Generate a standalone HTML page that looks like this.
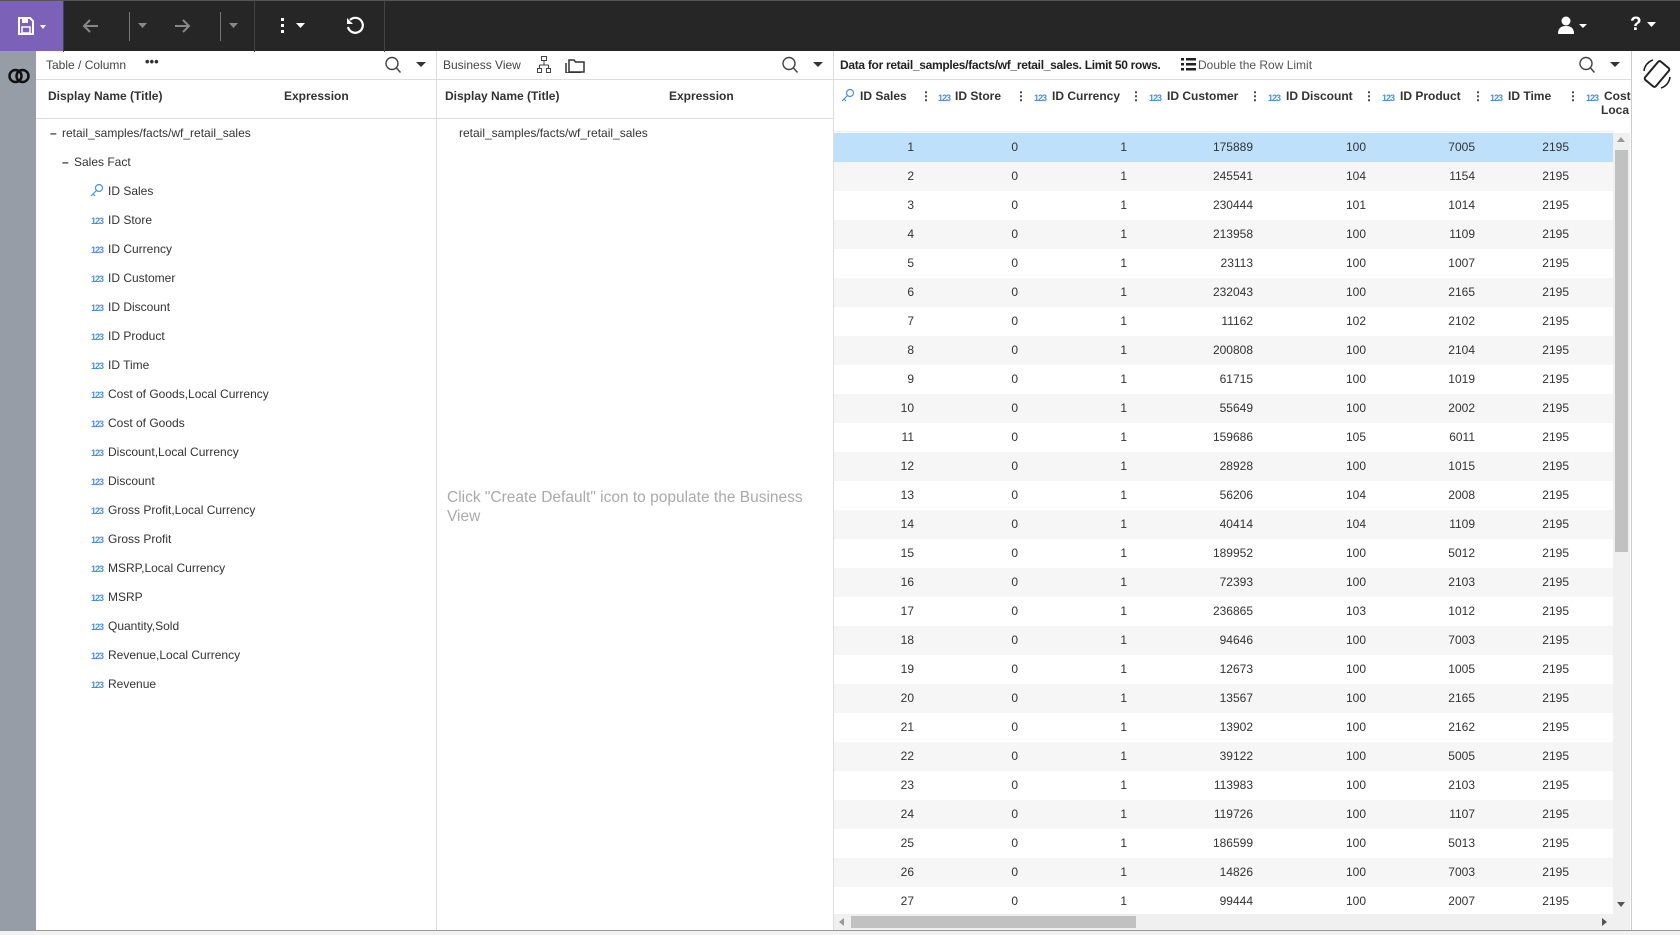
<!DOCTYPE html>
<html><head><meta charset="utf-8"><style>
*{box-sizing:border-box;margin:0;padding:0}
body{width:1680px;height:935px;overflow:hidden;background:#fff;font-family:"Liberation Sans",Arial,sans-serif;font-size:12px;color:#333;position:relative}
.a{position:absolute}
.top{left:0;top:0;width:1680px;height:51px;background:#262626;border-top:1px solid #555}
.sep{position:absolute;top:0;width:1px;height:51px;background:#444}
.gut{left:0;top:51px;width:36px;height:880px;background:#979da6}
.vl{position:absolute;width:1px;background:#ddd}
.hl{position:absolute;height:1px;background:#ddd}
.t{position:absolute;white-space:nowrap}
.ic{position:absolute;font-size:9px;color:#4a90e2;font-weight:bold;letter-spacing:-1px}
.hd{font-weight:bold;color:#333}
.r{position:relative;height:29px}
.r:nth-child(even){background:#f6f6f6}
.r:first-child{background:#bfe0fa}
.r span{position:absolute;top:7px;width:80px;text-align:right}
.c1{left:0}.c2{left:104px}.c3{left:213px}.c4{left:339px}.c5{left:452px}.c6{left:561px}.c7{left:655px}
</style></head><body>
<div class="a top">
  <div class="a" style="left:0;top:0;width:63px;height:50px;background:#7b62b8"></div>
  <svg class="a" style="left:18px;top:16px" width="30" height="18" viewBox="0 0 30 18"><path d="M1 1h11l3 3v13H1z" fill="none" stroke="#fff" stroke-width="2"/><rect x="4" y="1" width="6" height="5" fill="#fff"/><rect x="4" y="10" width="8" height="6" fill="none" stroke="#fff" stroke-width="1.5"/><path d="M22 8h6l-3 4z" fill="#fff"/></svg>
  <div class="sep" style="left:63px"></div>
  <svg class="a" style="left:82px;top:17px" width="18" height="16"><path d="M16 8H3M8 2L2 8l6 6" fill="none" stroke="#888" stroke-width="2"/></svg>
  <div class="a" style="left:129px;top:11px;width:1px;height:29px;background:#777"></div>
  <svg class="a" style="left:138px;top:22px" width="10" height="6"><path d="M0 0h9l-4.5 5z" fill="#888"/></svg>
  <svg class="a" style="left:173px;top:17px" width="18" height="16"><path d="M2 8h13M10 2l6 6-6 6" fill="none" stroke="#888" stroke-width="2"/></svg>
  <div class="a" style="left:220px;top:11px;width:1px;height:29px;background:#777"></div>
  <svg class="a" style="left:229px;top:22px" width="10" height="6"><path d="M0 0h9l-4.5 5z" fill="#888"/></svg>
  <div class="sep" style="left:254px"></div>
  <svg class="a" style="left:279px;top:17px" width="30" height="16"><rect x="2" y="0" width="3" height="3" fill="#fff"/><rect x="2" y="6" width="3" height="3" fill="#fff"/><rect x="2" y="12" width="3" height="3" fill="#fff"/><path d="M17 5h9l-4.5 5z" fill="#fff"/></svg>
  <svg class="a" style="left:345px;top:15px" width="20" height="20" viewBox="0 0 20 20"><path d="M5 4A7.5 7.5 0 1 1 3 11" fill="none" stroke="#fff" stroke-width="2.2"/><path d="M2 2v6h6z" fill="#fff"/></svg>
  <div class="sep" style="left:384px"></div>
  <svg class="a" style="left:1557px;top:15px" width="34" height="20"><circle cx="9" cy="5" r="4.5" fill="#fff"/><path d="M1 18c0-6 3-8 8-8s8 2 8 8z" fill="#fff"/><path d="M22 8h8l-4 4z" fill="#fff"/></svg>
  <div class="t" style="left:1630px;top:13px;color:#fff;font-size:19px;font-weight:bold">?</div>
  <svg class="a" style="left:1647px;top:21px" width="10" height="6"><path d="M0 0h9l-4.5 5z" fill="#fff"/></svg>
</div>
<div class="a gut"></div>
<svg class="a" style="left:8px;top:68px" width="22" height="16"><circle cx="7.5" cy="8" r="6" fill="none" stroke="#111" stroke-width="2.5"/><circle cx="14.5" cy="8" r="6" fill="none" stroke="#111" stroke-width="2.5"/></svg>

<div class="vl" style="left:436px;top:51px;height:880px"></div>
<div class="vl" style="left:833px;top:51px;height:880px"></div>
<div class="vl" style="left:1631px;top:51px;height:880px;background:#ccc"></div>
<div class="hl" style="left:36px;top:79px;width:1595px"></div>
<div class="hl" style="left:36px;top:118px;width:798px"></div>
<div class="hl" style="left:834px;top:131px;width:780px;background:#eee"></div>
<div class="hl" style="left:0;top:930px;width:1680px;background:#999"></div>

<div class="t" style="left:46px;top:58px;color:#444">Table / Column</div>
<div class="t" style="left:145px;top:54px;font-weight:bold;font-size:13px">•••</div>
<svg class="a" style="left:384px;top:56px" width="20" height="18"><circle cx="8" cy="7.5" r="6" fill="none" stroke="#444" stroke-width="1.4"/><path d="M12.5 12l4 4.5" stroke="#444" stroke-width="1.5"/></svg>
<svg class="a" style="left:416px;top:62px" width="10" height="6"><path d="M0 0h10l-5 5z" fill="#333"/></svg>
<div class="t hd" style="left:48px;top:89px">Display Name (Title)</div>
<div class="t hd" style="left:284px;top:89px">Expression</div>
<div class="t" style="left:50px;top:126px;font-weight:bold">–</div><div class="t" style="left:62px;top:126px">retail_samples/facts/wf_retail_sales</div>
<div class="t" style="left:62px;top:155px;font-weight:bold">–</div><div class="t" style="left:74px;top:155px">Sales Fact</div>
<svg class="a" style="left:90px;top:183px" width="14" height="14"><circle cx="9" cy="5" r="3.5" fill="none" stroke="#4a90e2" stroke-width="1.2"/><path d="M6.5 7.5L1 13M3 11l2 2" stroke="#4a90e2" stroke-width="1.2"/></svg><div class="t" style="left:108px;top:184px">ID Sales</div>
<div class="ic" style="left:91px;top:216px">123</div><div class="t" style="left:108px;top:213px">ID Store</div>
<div class="ic" style="left:91px;top:245px">123</div><div class="t" style="left:108px;top:242px">ID Currency</div>
<div class="ic" style="left:91px;top:274px">123</div><div class="t" style="left:108px;top:271px">ID Customer</div>
<div class="ic" style="left:91px;top:303px">123</div><div class="t" style="left:108px;top:300px">ID Discount</div>
<div class="ic" style="left:91px;top:332px">123</div><div class="t" style="left:108px;top:329px">ID Product</div>
<div class="ic" style="left:91px;top:361px">123</div><div class="t" style="left:108px;top:358px">ID Time</div>
<div class="ic" style="left:91px;top:390px">123</div><div class="t" style="left:108px;top:387px">Cost of Goods,Local Currency</div>
<div class="ic" style="left:91px;top:419px">123</div><div class="t" style="left:108px;top:416px">Cost of Goods</div>
<div class="ic" style="left:91px;top:448px">123</div><div class="t" style="left:108px;top:445px">Discount,Local Currency</div>
<div class="ic" style="left:91px;top:477px">123</div><div class="t" style="left:108px;top:474px">Discount</div>
<div class="ic" style="left:91px;top:506px">123</div><div class="t" style="left:108px;top:503px">Gross Profit,Local Currency</div>
<div class="ic" style="left:91px;top:535px">123</div><div class="t" style="left:108px;top:532px">Gross Profit</div>
<div class="ic" style="left:91px;top:564px">123</div><div class="t" style="left:108px;top:561px">MSRP,Local Currency</div>
<div class="ic" style="left:91px;top:593px">123</div><div class="t" style="left:108px;top:590px">MSRP</div>
<div class="ic" style="left:91px;top:622px">123</div><div class="t" style="left:108px;top:619px">Quantity,Sold</div>
<div class="ic" style="left:91px;top:651px">123</div><div class="t" style="left:108px;top:648px">Revenue,Local Currency</div>
<div class="ic" style="left:91px;top:680px">123</div><div class="t" style="left:108px;top:677px">Revenue</div>

<div class="t" style="left:443px;top:58px;color:#444">Business View</div>
<svg class="a" style="left:537px;top:56px" width="14" height="18"><rect x="4.5" y="0.5" width="5" height="4" fill="none" stroke="#444"/><path d="M7 5v4M2.5 9h9M2.5 9v3M11.5 9v3" stroke="#444" fill="none"/><rect x="0.5" y="12.5" width="4" height="4" fill="none" stroke="#444"/><rect x="9.5" y="12.5" width="4" height="4" fill="none" stroke="#444"/></svg>
<svg class="a" style="left:565px;top:57px" width="20" height="16"><path d="M4 3h5l1.5 2H19v10H4z M1 6v10h15" fill="none" stroke="#333" stroke-width="1.5"/></svg>
<svg class="a" style="left:781px;top:56px" width="20" height="18"><circle cx="8" cy="7.5" r="6" fill="none" stroke="#444" stroke-width="1.4"/><path d="M12.5 12l4 4.5" stroke="#444" stroke-width="1.5"/></svg>
<svg class="a" style="left:813px;top:62px" width="10" height="6"><path d="M0 0h10l-5 5z" fill="#333"/></svg>
<div class="t hd" style="left:445px;top:89px">Display Name (Title)</div>
<div class="t hd" style="left:669px;top:89px">Expression</div>
<div class="t" style="left:459px;top:126px">retail_samples/facts/wf_retail_sales</div>
<div class="t" style="left:447px;top:488px;color:#aaa;font-size:15.5px;line-height:19px;width:380px;white-space:normal">Click "Create Default" icon to populate the Business View</div>

<div class="t" style="left:840px;top:58px;font-weight:bold;color:#222;letter-spacing:-0.3px">Data for retail_samples/facts/wf_retail_sales. Limit 50 rows.</div>
<svg class="a" style="left:1181px;top:57px" width="15" height="14"><rect x="0" y="1" width="3" height="2.5" fill="#222"/><rect x="0" y="6" width="3" height="2.5" fill="#222"/><rect x="0" y="11" width="3" height="2.5" fill="#222"/><rect x="5" y="1" width="10" height="2.5" fill="#222"/><rect x="5" y="6" width="10" height="2.5" fill="#222"/><rect x="5" y="11" width="10" height="2.5" fill="#222"/></svg>
<div class="t" style="left:1198px;top:58px;color:#555">Double the Row Limit</div>
<svg class="a" style="left:1578px;top:56px" width="20" height="18"><circle cx="8" cy="7.5" r="6" fill="none" stroke="#444" stroke-width="1.4"/><path d="M12.5 12l4 4.5" stroke="#444" stroke-width="1.5"/></svg>
<svg class="a" style="left:1610px;top:62px" width="10" height="6"><path d="M0 0h10l-5 5z" fill="#333"/></svg>
<svg class="a" style="left:1641px;top:57px" width="32" height="34" viewBox="0 0 32 34"><rect x="9" y="5" width="14" height="24" rx="2" transform="rotate(40 16 17)" fill="none" stroke="#222" stroke-width="2"/><path d="M3 14a13 13 0 0 1 9-11M29 20a13 13 0 0 1-9 11" fill="none" stroke="#222" stroke-width="1.6"/></svg>

<svg class="a" style="left:841px;top:88px" width="14" height="14"><circle cx="9" cy="5" r="3.5" fill="none" stroke="#4a90e2" stroke-width="1.2"/><path d="M6.5 7.5L1 13M3 11l2 2" stroke="#4a90e2" stroke-width="1.2"/></svg>
<div class="t hd" style="left:860px;top:89px">ID Sales</div><div class="t hd" style="left:920px;top:89px">⋮</div>
<div class="ic" style="left:938px;top:93px">123</div><div class="t hd" style="left:955px;top:89px">ID Store</div><div class="t hd" style="left:1015px;top:89px">⋮</div>
<div class="ic" style="left:1034px;top:93px">123</div><div class="t hd" style="left:1052px;top:89px">ID Currency</div><div class="t hd" style="left:1130px;top:89px">⋮</div>
<div class="ic" style="left:1149px;top:93px">123</div><div class="t hd" style="left:1167px;top:89px">ID Customer</div><div class="t hd" style="left:1249px;top:89px">⋮</div>
<div class="ic" style="left:1268px;top:93px">123</div><div class="t hd" style="left:1286px;top:89px">ID Discount</div><div class="t hd" style="left:1363px;top:89px">⋮</div>
<div class="ic" style="left:1382px;top:93px">123</div><div class="t hd" style="left:1400px;top:89px">ID Product</div><div class="t hd" style="left:1472px;top:89px">⋮</div>
<div class="ic" style="left:1490px;top:93px">123</div><div class="t hd" style="left:1508px;top:89px">ID Time</div><div class="t hd" style="left:1567px;top:89px">⋮</div>
<div class="ic" style="left:1586px;top:93px">123</div><div class="t hd" style="left:1604px;top:89px">Cost</div><div class="t hd" style="left:1601px;top:103px">Loca</div>

<div class="a" style="left:834px;top:133px;width:780px;height:790px;overflow:hidden">
<div class="r"><span class="c1">1</span><span class="c2">0</span><span class="c3">1</span><span class="c4">175889</span><span class="c5">100</span><span class="c6">7005</span><span class="c7">2195</span></div>
<div class="r"><span class="c1">2</span><span class="c2">0</span><span class="c3">1</span><span class="c4">245541</span><span class="c5">104</span><span class="c6">1154</span><span class="c7">2195</span></div>
<div class="r"><span class="c1">3</span><span class="c2">0</span><span class="c3">1</span><span class="c4">230444</span><span class="c5">101</span><span class="c6">1014</span><span class="c7">2195</span></div>
<div class="r"><span class="c1">4</span><span class="c2">0</span><span class="c3">1</span><span class="c4">213958</span><span class="c5">100</span><span class="c6">1109</span><span class="c7">2195</span></div>
<div class="r"><span class="c1">5</span><span class="c2">0</span><span class="c3">1</span><span class="c4">23113</span><span class="c5">100</span><span class="c6">1007</span><span class="c7">2195</span></div>
<div class="r"><span class="c1">6</span><span class="c2">0</span><span class="c3">1</span><span class="c4">232043</span><span class="c5">100</span><span class="c6">2165</span><span class="c7">2195</span></div>
<div class="r"><span class="c1">7</span><span class="c2">0</span><span class="c3">1</span><span class="c4">11162</span><span class="c5">102</span><span class="c6">2102</span><span class="c7">2195</span></div>
<div class="r"><span class="c1">8</span><span class="c2">0</span><span class="c3">1</span><span class="c4">200808</span><span class="c5">100</span><span class="c6">2104</span><span class="c7">2195</span></div>
<div class="r"><span class="c1">9</span><span class="c2">0</span><span class="c3">1</span><span class="c4">61715</span><span class="c5">100</span><span class="c6">1019</span><span class="c7">2195</span></div>
<div class="r"><span class="c1">10</span><span class="c2">0</span><span class="c3">1</span><span class="c4">55649</span><span class="c5">100</span><span class="c6">2002</span><span class="c7">2195</span></div>
<div class="r"><span class="c1">11</span><span class="c2">0</span><span class="c3">1</span><span class="c4">159686</span><span class="c5">105</span><span class="c6">6011</span><span class="c7">2195</span></div>
<div class="r"><span class="c1">12</span><span class="c2">0</span><span class="c3">1</span><span class="c4">28928</span><span class="c5">100</span><span class="c6">1015</span><span class="c7">2195</span></div>
<div class="r"><span class="c1">13</span><span class="c2">0</span><span class="c3">1</span><span class="c4">56206</span><span class="c5">104</span><span class="c6">2008</span><span class="c7">2195</span></div>
<div class="r"><span class="c1">14</span><span class="c2">0</span><span class="c3">1</span><span class="c4">40414</span><span class="c5">104</span><span class="c6">1109</span><span class="c7">2195</span></div>
<div class="r"><span class="c1">15</span><span class="c2">0</span><span class="c3">1</span><span class="c4">189952</span><span class="c5">100</span><span class="c6">5012</span><span class="c7">2195</span></div>
<div class="r"><span class="c1">16</span><span class="c2">0</span><span class="c3">1</span><span class="c4">72393</span><span class="c5">100</span><span class="c6">2103</span><span class="c7">2195</span></div>
<div class="r"><span class="c1">17</span><span class="c2">0</span><span class="c3">1</span><span class="c4">236865</span><span class="c5">103</span><span class="c6">1012</span><span class="c7">2195</span></div>
<div class="r"><span class="c1">18</span><span class="c2">0</span><span class="c3">1</span><span class="c4">94646</span><span class="c5">100</span><span class="c6">7003</span><span class="c7">2195</span></div>
<div class="r"><span class="c1">19</span><span class="c2">0</span><span class="c3">1</span><span class="c4">12673</span><span class="c5">100</span><span class="c6">1005</span><span class="c7">2195</span></div>
<div class="r"><span class="c1">20</span><span class="c2">0</span><span class="c3">1</span><span class="c4">13567</span><span class="c5">100</span><span class="c6">2165</span><span class="c7">2195</span></div>
<div class="r"><span class="c1">21</span><span class="c2">0</span><span class="c3">1</span><span class="c4">13902</span><span class="c5">100</span><span class="c6">2162</span><span class="c7">2195</span></div>
<div class="r"><span class="c1">22</span><span class="c2">0</span><span class="c3">1</span><span class="c4">39122</span><span class="c5">100</span><span class="c6">5005</span><span class="c7">2195</span></div>
<div class="r"><span class="c1">23</span><span class="c2">0</span><span class="c3">1</span><span class="c4">113983</span><span class="c5">100</span><span class="c6">2103</span><span class="c7">2195</span></div>
<div class="r"><span class="c1">24</span><span class="c2">0</span><span class="c3">1</span><span class="c4">119726</span><span class="c5">100</span><span class="c6">1107</span><span class="c7">2195</span></div>
<div class="r"><span class="c1">25</span><span class="c2">0</span><span class="c3">1</span><span class="c4">186599</span><span class="c5">100</span><span class="c6">5013</span><span class="c7">2195</span></div>
<div class="r"><span class="c1">26</span><span class="c2">0</span><span class="c3">1</span><span class="c4">14826</span><span class="c5">100</span><span class="c6">7003</span><span class="c7">2195</span></div>
<div class="r"><span class="c1">27</span><span class="c2">0</span><span class="c3">1</span><span class="c4">99444</span><span class="c5">100</span><span class="c6">2007</span><span class="c7">2195</span></div>
</div>

<div class="a" style="left:1613px;top:133px;width:17px;height:781px;background:#f0f0f0"></div>
<div class="a" style="left:1615px;top:150px;width:13px;height:402px;background:#c1c1c1"></div>
<svg class="a" style="left:1617px;top:137px" width="9" height="6"><path d="M0 5h8l-4-5z" fill="#999"/></svg>
<svg class="a" style="left:1617px;top:902px" width="9" height="6"><path d="M0 0h8l-4 5z" fill="#555"/></svg>
<div class="a" style="left:834px;top:914px;width:796px;height:16px;background:#f0f0f0"></div>
<div class="a" style="left:851px;top:916px;width:285px;height:12px;background:#c1c1c1"></div>
<svg class="a" style="left:839px;top:918px" width="6" height="9"><path d="M5 0v8L0 4z" fill="#999"/></svg>
<svg class="a" style="left:1602px;top:918px" width="6" height="9"><path d="M0 0v8l5-4z" fill="#555"/></svg>
<div class="a" style="left:0;top:931px;width:1680px;height:4px;background:#f2f2f2"></div>
</body></html>
